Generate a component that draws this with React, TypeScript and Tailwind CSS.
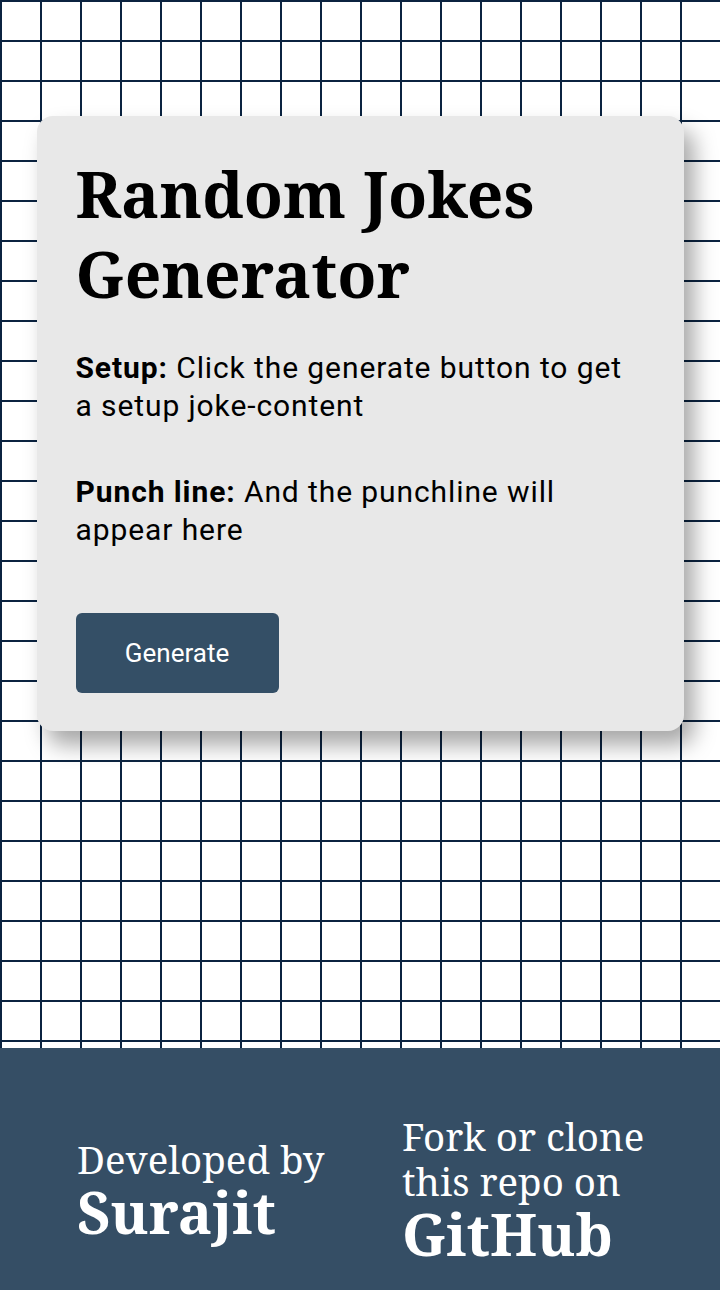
import React from "react";

export default function App() {
  return (
    <div className="w-[720px] min-h-[1290px] bg-white font-['Roboto',sans-serif]">
      <main className="h-[1048px] pt-[116px] bg-[linear-gradient(to_right,#0b2340_2px,transparent_2px),linear-gradient(to_bottom,#0b2340_2px,transparent_2px)] bg-[length:40px_40px]">
        <div className="mx-auto w-[647px] h-[615px] bg-[#e8e8e8] rounded-[16px] shadow-[10px_14px_22px_rgba(0,0,0,0.35)] px-[39px] pt-[38px]">
          <h1 className="font-['Noto_Serif','DejaVu_Serif',serif] font-bold text-[64px] leading-[80px] text-black">
            Random Jokes Generator
          </h1>
          <p className="mt-[35px] text-[30px] leading-[38px] tracking-[0.9px] text-black">
            <b className="font-bold">Setup:</b> Click the generate button to get a setup joke-content
          </p>
          <p className="mt-[48px] text-[30px] leading-[38px] tracking-[0.9px] text-black">
            <b className="font-bold">Punch line:</b> And the punchline will appear here
          </p>
          <button className="mt-[64px] w-[203px] h-[80px] rounded-[6px] bg-[#344f66] text-white text-[26px] font-['Roboto',sans-serif]">
            Generate
          </button>
        </div>
      </main>
      <footer className="h-[242px] bg-[#354e65] flex items-center pl-[77px] text-white font-['Noto_Serif','DejaVu_Serif',serif]">
        <div className="w-[325px] pt-[40px]">
          <div className="text-[38.4px] leading-[45px]">Developed by</div>
          <div className="text-[57.6px] leading-[60px] font-bold">Surajit</div>
        </div>
        <div className="pt-[40px]">
          <div className="text-[38.4px] leading-[45px]">Fork or clone</div>
          <div className="text-[38.4px] leading-[45px]">this repo on</div>
          <div className="text-[57.6px] leading-[60px] font-bold">GitHub</div>
        </div>
      </footer>
    </div>
  );
}
